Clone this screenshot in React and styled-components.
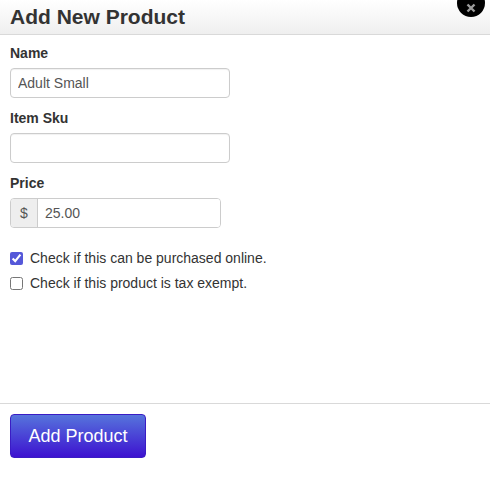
import React from 'react';
import styled, {createGlobalStyle} from "styled-components";

const GlobalStyle = createGlobalStyle`
  html, body {
    margin: 0;
    padding: 0;
    background: #fff;
  }
  body {
    font-family: "Liberation Sans", Arial, sans-serif;
    color: #333;
  }
`

const Field = ({label, children}) => (
    <FieldGroup>
        <Label>{label}</Label>
        {children}
    </FieldGroup>
);

const CloseIcon = () => (
    <svg width="10" height="10" viewBox="0 0 10 10">
        <path d="M1.5 1.5 L8.5 8.5 M8.5 1.5 L1.5 8.5" stroke="#9c9c9c" strokeWidth="2.4" strokeLinecap="butt"/>
    </svg>
);

const App = () => {
    return (
        <>
            <GlobalStyle/>
            <Modal>
                <Header>
                    <Title>Add New Product</Title>
                    <CloseButton aria-label="Close"><CloseIcon/></CloseButton>
                </Header>
                <Body>
                    <Field label="Name">
                        <TextInput defaultValue="Adult Small"/>
                    </Field>
                    <Field label="Item Sku">
                        <TextInput defaultValue=""/>
                    </Field>
                    <Field label="Price">
                        <InputGroup>
                            <Addon>$</Addon>
                            <GroupInput defaultValue="25.00"/>
                        </InputGroup>
                    </Field>
                    <Checks>
                        <CheckRow>
                            <Checkbox type="checkbox" defaultChecked/>
                            Check if this can be purchased online.
                        </CheckRow>
                        <CheckRow>
                            <Checkbox type="checkbox"/>
                            Check if this product is tax exempt.
                        </CheckRow>
                    </Checks>
                </Body>
                <Footer>
                    <PrimaryButton>Add Product</PrimaryButton>
                </Footer>
            </Modal>
        </>
    );
};

export default App;

const Modal = styled.div`
  position: relative;
  height: 493px;
  display: flex;
  flex-direction: column;
  overflow: hidden;
  background: #fff;
`

const Header = styled.div`
  height: 34px;
  padding: 0 10px;
  background: linear-gradient(to bottom, #ffffff 0%, #efefef 100%);
  border-bottom: 1px solid #d9d9d9;
`

const Title = styled.h3`
  margin: 0;
  font-size: 21px;
  line-height: 34px;
  font-weight: bold;
  color: #333;
`

const CloseButton = styled.button`
  position: absolute;
  top: -11px;
  left: 457px;
  width: 28px;
  height: 28px;
  border: none;
  border-radius: 50%;
  background: #000;
  padding: 14px 0 0;
  display: flex;
  justify-content: center;
  align-items: flex-start;
  cursor: pointer;
`

const Body = styled.div`
  flex: 1;
  padding: 8px 10px 0;
`

const FieldGroup = styled.div`
  margin-bottom: 10px;
`

const Label = styled.label`
  display: block;
  font-size: 14px;
  line-height: 20px;
  font-weight: bold;
  color: #333;
  margin-bottom: 5px;
`

const TextInput = styled.input`
  box-sizing: border-box;
  display: block;
  width: 220px;
  height: 30px;
  padding: 0 7px;
  border: 1px solid #ccc;
  border-radius: 4px;
  font-family: "Liberation Sans", Arial, sans-serif;
  font-size: 14px;
  color: #555;
  box-shadow: inset 0 1px 1px rgba(0, 0, 0, 0.06);
`

const InputGroup = styled.div`
  display: flex;
  width: 211px;
  height: 30px;
  box-sizing: border-box;
  border: 1px solid #ccc;
  border-radius: 4px;
  overflow: hidden;
`

const Addon = styled.span`
  width: 26px;
  display: flex;
  align-items: center;
  justify-content: center;
  background: #eee;
  border-right: 1px solid #ccc;
  font-size: 14px;
  color: #555;
`

const GroupInput = styled.input`
  flex: 1;
  min-width: 0;
  border: none;
  padding: 0 7px;
  font-family: "Liberation Sans", Arial, sans-serif;
  font-size: 14px;
  color: #555;
  outline: none;
`

const Checks = styled.div`
  display: flex;
  flex-direction: column;
  gap: 5px;
  padding-top: 10px;
`

const CheckRow = styled.label`
  display: flex;
  align-items: center;
  gap: 7px;
  height: 20px;
  font-size: 14px;
  color: #333;
`

const Checkbox = styled.input`
  margin: 0;
  width: 13px;
  height: 13px;
  accent-color: #5558d9;
`

const Footer = styled.div`
  border-top: 1px solid #d9d9d9;
  padding: 10px 10px 35px;
`

const PrimaryButton = styled.button`
  width: 136px;
  height: 44px;
  border: 1px solid #3a1cc4;
  border-radius: 4px;
  background: linear-gradient(to bottom, #5674dc 0%, #3d12d0 100%);
  color: #fff;
  font-family: "Liberation Sans", Arial, sans-serif;
  font-size: 18px;
  cursor: pointer;
`
